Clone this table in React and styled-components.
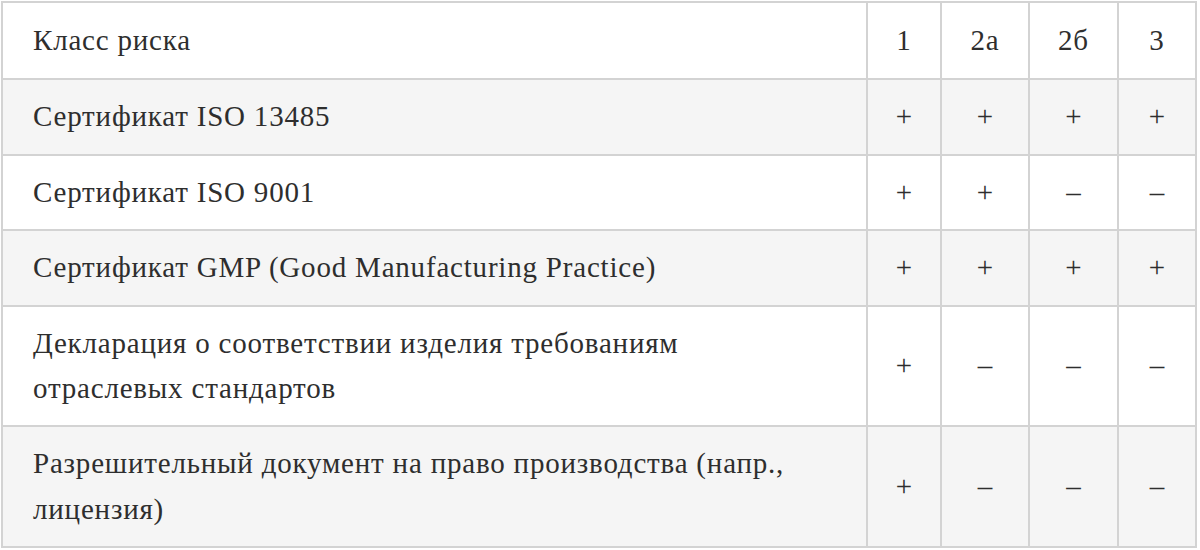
import React from "react";
import styled, { createGlobalStyle } from "styled-components";

const GlobalStyle = createGlobalStyle`
  html, body {
    margin: 0;
    padding: 0;
    background: #ffffff;
  }
  body {
    font-family: "Liberation Serif", "DejaVu Serif", serif;
    color: #2e2e2e;
  }
`;

const Wrapper = styled.div`
  padding: 1px 3px 0 1px;
`;

const Table = styled.table`
  width: 1196px;
  border-collapse: collapse;
  table-layout: fixed;
  font-size: 29px;
  letter-spacing: 0.8px;
  line-height: 45.4px;
`;

const Row = styled.tr`
  background: ${({ $shaded }) => ($shaded ? "#f5f5f5" : "#ffffff")};
`;

const Cell = styled.td`
  border: 2px solid #d3d3d3;
  padding: ${({ $head }) => ($head ? "15px" : "14px")} 30px;
  text-align: ${({ $center }) => ($center ? "center" : "left")};
  vertical-align: middle;
  padding-left: ${({ $center }) => ($center ? "0" : "30px")};
  padding-right: ${({ $center }) => ($center ? "0" : "30px")};
`;

const Mark = styled.span`
  font-size: 29px;
  letter-spacing: 0;
`;

const columns = [
  { label: "1", width: 74 },
  { label: "2а", width: 88 },
  { label: "2б", width: 89 },
  { label: "3", width: 78 },
];

const rows = [
  { title: ["Сертификат ISO 13485"], marks: ["+", "+", "+", "+"] },
  { title: ["Сертификат ISO 9001"], marks: ["+", "+", "–", "–"] },
  {
    title: ["Сертификат GMP (Good Manufacturing Practice)"],
    marks: ["+", "+", "+", "+"],
  },
  {
    title: ["Декларация о соответствии изделия требованиям", "отраслевых стандартов"],
    marks: ["+", "–", "–", "–"],
  },
  {
    title: ["Разрешительный документ на право производства (напр.,", "лицензия)"],
    marks: ["+", "–", "–", "–"],
  },
];

export default function App() {
  return (
    <>
      <GlobalStyle />
      <Wrapper>
        <Table>
          <colgroup>
            <col />
            {columns.map((c) => (
              <col key={c.label} style={{ width: c.width }} />
            ))}
          </colgroup>
          <tbody>
            <Row>
              <Cell $head>Класс риска</Cell>
              {columns.map((c) => (
                <Cell $head $center key={c.label}>
                  {c.label}
                </Cell>
              ))}
            </Row>
            {rows.map((r, i) => (
              <Row key={i} $shaded={i % 2 === 0}>
                <Cell>
                  {r.title.map((line, j) => (
                    <React.Fragment key={j}>
                      {j > 0 && <br />}
                      {line}
                    </React.Fragment>
                  ))}
                </Cell>
                {r.marks.map((m, j) => (
                  <Cell $center key={j}>
                    <Mark>{m}</Mark>
                  </Cell>
                ))}
              </Row>
            ))}
          </tbody>
        </Table>
      </Wrapper>
    </>
  );
}
